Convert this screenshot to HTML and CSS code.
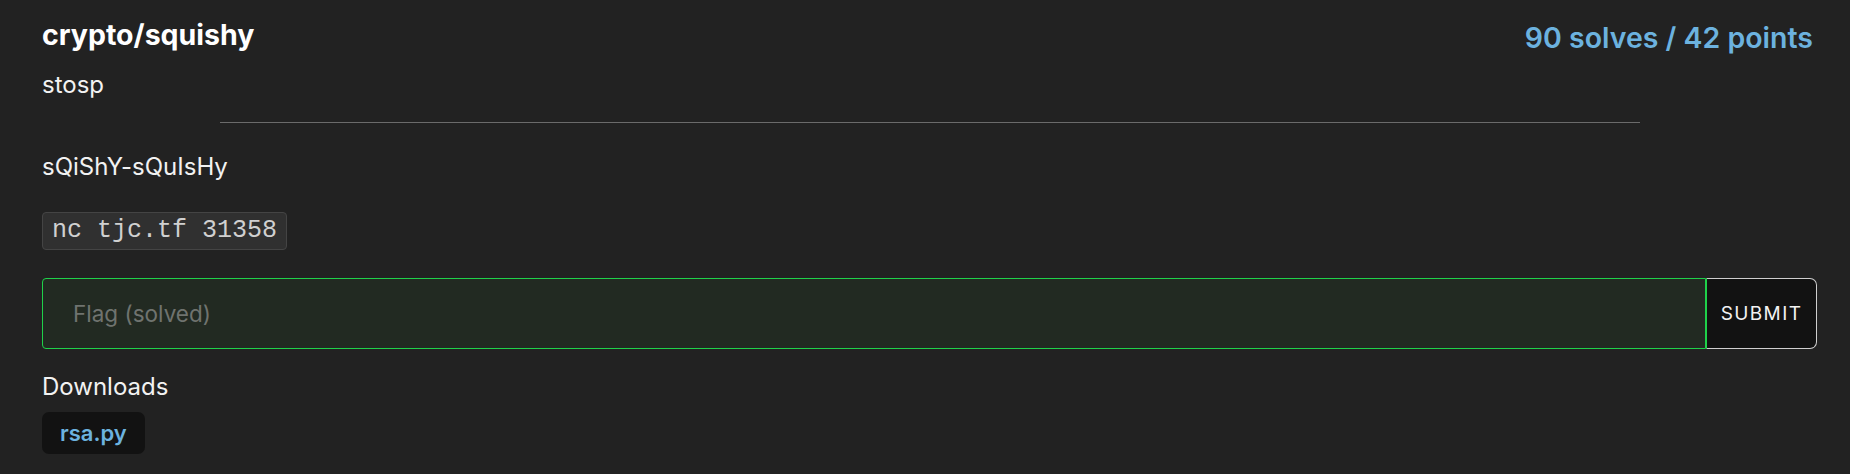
FILE: index.html
```html
<!DOCTYPE html>
<html>
<head>
<meta charset="utf-8">
<link rel="stylesheet" href="styles.css">
</head>
<body>
<div class="challenge">
  <div class="header">
    <div class="info">
      <h2 class="title">crypto/squishy</h2>
      <div class="author">stosp</div>
    </div>
    <div class="stats">90 solves / 42 points</div>
  </div>
  <hr class="divider">
  <p class="desc">sQiShY-sQuIsHy</p>
  <div class="code-wrap"><code class="code">nc tjc.tf 31358</code></div>
  <form class="flag-form">
    <input class="flag-input" type="text" placeholder="Flag (solved)">
    <button class="submit" type="button">SUBMIT</button>
  </form>
  <div class="downloads-label">Downloads</div>
  <div class="downloads">
    <a class="file" href="#">rsa.py</a>
  </div>
</div>
</body>
</html>
```

FILE: styles.css
```css
html, body {
  margin: 0;
  padding: 0;
  background: #222222;
}
body {
  font-family: Inter, "Noto Sans", sans-serif;
  color: #f2f2f2;
}
.challenge {
  padding: 18px 33px 0 42px;
}
.header {
  display: flex;
  justify-content: space-between;
  align-items: flex-start;
}
.title {
  margin: 0;
  font-size: 28.5px;
  font-weight: 700;
  line-height: 34px;
  color: #ffffff;
}
.author {
  margin-top: 18px;
  font-size: 24px;
  line-height: 30px;
}
.stats {
  font-size: 28.5px;
  font-weight: 600;
  line-height: 34px;
  color: #6cb2df;
  padding-top: 3px;
  margin-right: 4px;
}
.divider {
  width: 80%;
  margin: 22px auto 0;
  border: 0;
  border-top: 1px solid #6b6b6b;
  height: 0;
}
.desc {
  margin: 29px 0 0;
  font-size: 24px;
  line-height: 30px;
}
.code-wrap {
  display: flex;
  margin-top: 30px;
}
.code {
  display: block;
  font-family: "Liberation Mono", monospace;
  font-size: 25px;
  line-height: 36px;
  padding: 0 9px;
  color: #d0d0d0;
  background: #303030;
  border: 1px solid #444444;
  border-radius: 4px;
}
.flag-form {
  display: flex;
  margin-top: 28px;
  height: 71px;
}
.flag-input {
  flex: 1;
  min-width: 0;
  box-sizing: border-box;
  height: 100%;
  margin: 0;
  padding: 0 30px;
  background: #222a22;
  border: 1px solid #1fd14a;
  border-radius: 4px 0 0 4px;
  font-family: Inter, "Noto Sans", sans-serif;
  font-size: 22.5px;
  color: #f2f2f2;
  outline: none;
}
.flag-input::placeholder {
  color: #6f736f;
}
.submit {
  box-sizing: border-box;
  width: 111px;
  height: 100%;
  margin: 0;
  padding: 0;
  background: #121212;
  border: 1px solid #cfcfcf;
  border-left-color: #1fd14a;
  border-radius: 0 7px 7px 0;
  color: #f2f2f2;
  font-family: Inter, "Noto Sans", sans-serif;
  font-size: 19px;
  letter-spacing: 1.4px;
}
.downloads-label {
  margin-top: 23px;
  font-size: 24px;
  line-height: 30px;
}
.downloads {
  margin-top: 10px;
  display: flex;
}
.file {
  display: block;
  padding: 0 18px;
  line-height: 42px;
  background: #121212;
  border-radius: 7px;
  color: #6cb2df;
  font-size: 22px;
  font-weight: 600;
  text-decoration: none;
}
```
